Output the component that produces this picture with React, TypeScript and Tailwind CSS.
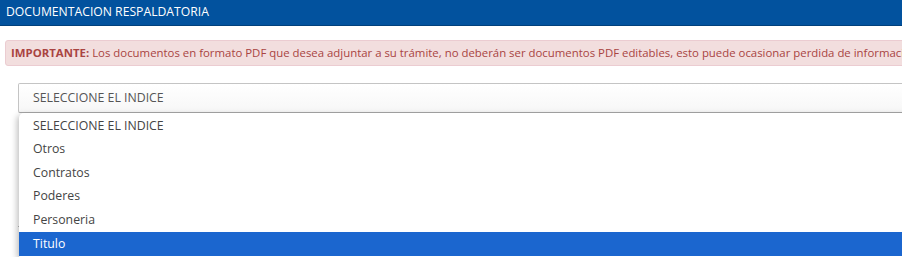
export default function App() {
  const options = ["SELECCIONE EL INDICE", "Otros", "Contratos", "Poderes", "Personeria", "Titulo"]
  const selected = 5

  return (
    <div className="w-[902px] h-[257px] overflow-hidden bg-white font-['Open_Sans',sans-serif]">
      <div className="h-[26px] bg-[#02529e] border-b border-[#01407c] flex items-center pl-[6px]">
        <span className="text-white text-[12.2px] whitespace-nowrap">DOCUMENTACION RESPALDATORIA</span>
      </div>

      <div className="mt-[14px] ml-[5px] w-[920px] h-[26px] bg-[#f2dede] border border-[#ebccd1] rounded-[3px] flex items-center pl-[5px]">
        <p className="text-[11.4px] text-[#a94442] whitespace-nowrap">
          <b className="font-bold">IMPORTANTE:</b> Los documentos en formato PDF que desea adjuntar a su trámite, no deberán ser documentos PDF editables, esto puede ocasionar perdida de información.
        </p>
      </div>

      <div className="relative mt-[17px] ml-[18px] w-[900px]">
        <div className="h-[30px] border border-[#c4c4c4] border-b-[#a8a8a8] rounded-[2px] bg-gradient-to-b from-white to-[#f7f7f7] flex items-center pl-[14px]">
          <span className="text-[12.3px] text-[#555]">SELECCIONE EL INDICE</span>
        </div>

        <div className="absolute top-[30px] left-[1px] w-[900px] bg-white rounded-tl-[5px] rounded-bl-[3px] shadow-[-2px_2px_6px_rgba(0,0,0,0.25)] z-10 pt-[1px] pb-[2px]">
          {options.map((o, i) => (
            <div
              key={o}
              className={
                i === selected
                  ? "h-[23.6px] flex items-center pl-[14px] bg-[#1b66cf] text-white text-[12.3px]"
                  : "h-[23.6px] flex items-center pl-[14px] text-[#444] text-[12.3px]"
              }
            >
              {o}
            </div>
          ))}
        </div>

        <div className="mt-[113px] h-[4px] border-t border-[#bbb]" />
      </div>
    </div>
  )
}
